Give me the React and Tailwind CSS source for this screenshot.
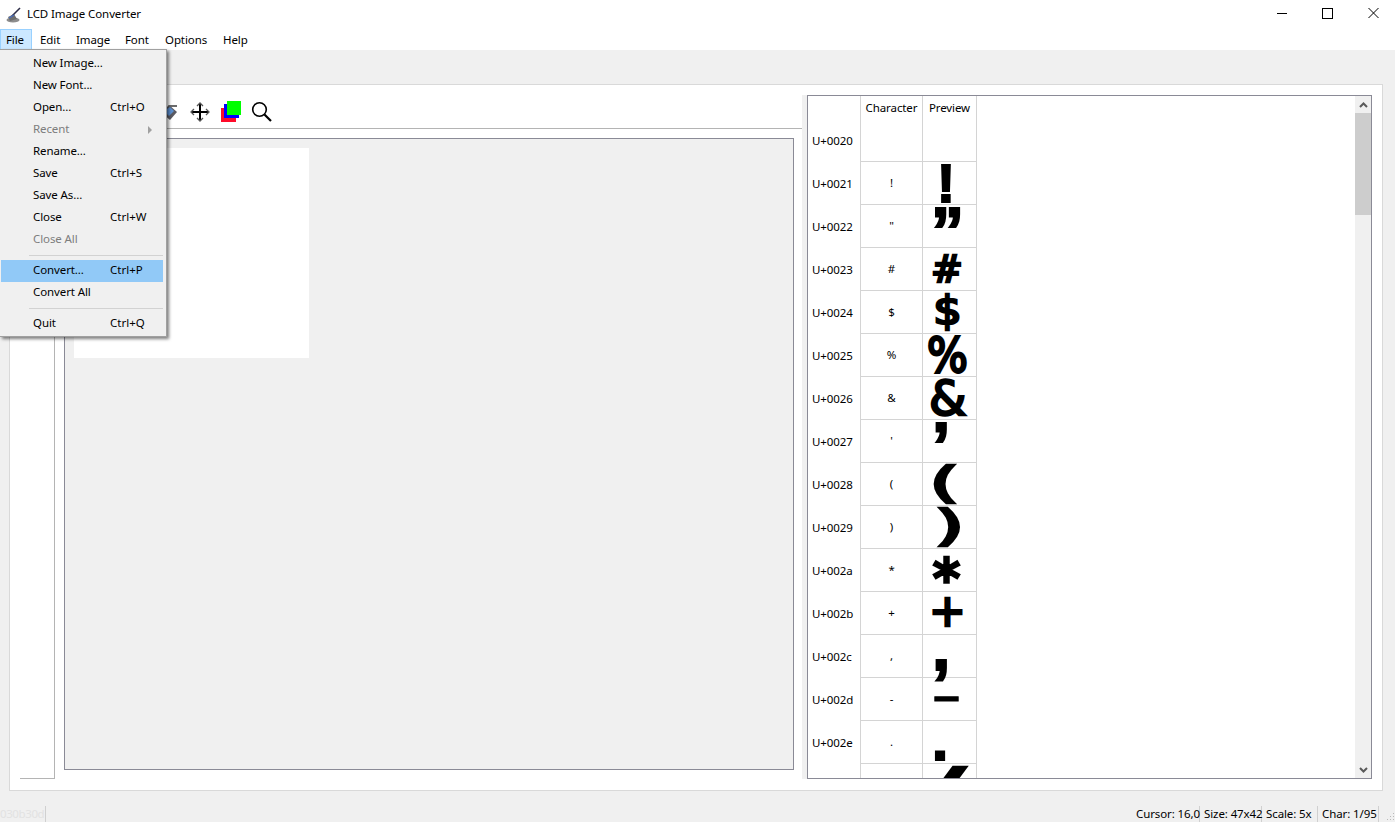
import React from "react";

const menus = [
  ["File", "w-[32px] pl-[5px] bg-[#cce8ff] border border-[#99d1ff]"],
  ["Edit", "w-[36px] pl-[7px] border border-transparent"],
  ["Image", "w-[49px] pl-[7px] border border-transparent"],
  ["Font", "w-[40px] pl-[7px] border border-transparent"],
  ["Options", "w-[58px] pl-[7px] border border-transparent"],
  ["Help", "w-[50px] pl-[7px] border border-transparent"],
];

const LB = "font-bold font-['Liberation_Sans',sans-serif] [-webkit-text-stroke:2px_#000] ";
const DV = "font-normal font-['DejaVu_Sans',sans-serif] [-webkit-text-stroke:2.5px_#000] ";
const DVH = "font-normal font-['DejaVu_Sans',sans-serif] [-webkit-text-stroke:3.5px_#000] ";
const DVT = "font-normal font-['DejaVu_Sans',sans-serif] [-webkit-text-stroke:1px_#000] ";

const rows = [
  ["U+0021", "!", "!", LB + "left-[14px] top-[-6px] text-[54px]"],
  ["U+0022", "\"", "\u201D", LB + "left-[8px] top-[-7px] text-[66px]"],
  ["U+0023", "#", "#", DV + "left-[8px] top-[2px] text-[38px]"],
  ["U+0024", "$", "$", DV + "left-[12px] top-[0px] text-[39px] scale-x-[1.15]"],
  ["U+0025", "%", "%", DV + "left-[4px] top-[0px] text-[43px] scale-y-[1.12]"],
  ["U+0026", "&", "&", DV + "left-[6px] top-[-3px] text-[48px]"],
  ["U+0027", "'", "\u2019", LB + "left-[9px] top-[-7px] text-[66px]"],
  ["U+0028", "(", "(", DV + "left-[13px] top-[-1px] text-[43px] scale-x-[1.8]"],
  ["U+0029", ")", ")", DV + "left-[18px] top-[-1px] text-[43px] scale-x-[1.8]"],
  ["U+002a", "*", "*", DVH + "left-[10px] top-[3px] text-[54px]"],
  ["U+002b", "+", "+", DV + "left-[6px] top-[-3px] text-[44px]"],
  ["U+002c", ",", ",", LB + "left-[9px] top-[-21px] text-[66px]"],
  ["U+002d", "-", "\u2013", DVT + "left-[9px] top-[-12px] text-[58px]"],
  ["U+002e", ".", ".", LB + "left-[9px] top-[-10px] text-[58px]"],
  ["U+002f", "/", "/", DV + "left-[13px] top-[-3px] text-[50px] scale-x-[2.4]"],
];

const fileItems = [
  { t: "New Image..." },
  { t: "New Font..." },
  { t: "Open...", s: "Ctrl+O" },
  { t: "Recent", d: true, arrow: true },
  { t: "Rename..." },
  { t: "Save", s: "Ctrl+S" },
  { t: "Save As..." },
  { t: "Close", s: "Ctrl+W" },
  { t: "Close All", d: true },
  { sep: true },
  { t: "Convert...", s: "Ctrl+P", active: true },
  { t: "Convert All" },
  { sep: true },
  { t: "Quit", s: "Ctrl+Q" },
];

function Glyph({ c, cls }) {
  return (
    <span className={"absolute leading-none tracking-normal text-black [stroke-linejoin:round] " + cls}>
      {c}
    </span>
  );
}

function AppIcon() {
  return (
    <svg width="18" height="18" viewBox="0 0 18 18" className="ml-[5px]">
      <ellipse cx="8" cy="14" rx="6.5" ry="2.5" fill="#8d8d8d" />
      <path d="M3 11 L9 8 L12 13 L5 15 Z" fill="#6f6f6f" />
      <path d="M7 10 L15 2" stroke="#2e2e48" strokeWidth="1.6" />
      <path d="M4 12 L9 9" stroke="#4a6fc0" strokeWidth="1.4" />
    </svg>
  );
}

function ToolIcons() {
  return (
    <div className="flex items-center h-full pl-[98px]">
      <svg width="16" height="20" viewBox="0 0 16 20" className="mr-[12px]">
        <path d="M1 9 L7 3 L15 10 L8 18 L1 12 Z" fill="#5a5a62" />
        <path d="M2 9 L8 5 L12 9 L7 14 Z" fill="#5c8fd0" />
        <path d="M6 3 H15 V5 H8 Z" fill="#6b6b6b" />
      </svg>
      <svg width="20" height="20" viewBox="0 0 20 20" className="mr-[11px]">
        <path d="M10 1.5 V18.5 M1.5 10 H18.5" stroke="#000" strokeWidth="2" />
        <path d="M7 4 L10 1 L13 4 M7 16 L10 19 L13 16 M4 7 L1 10 L4 13 M16 7 L19 10 L16 13" fill="none" stroke="#555" strokeWidth="1.3" />
      </svg>
      <div className="relative w-[21px] h-[22px] mr-[9px]">
        <div className="absolute left-0 top-[7px] w-[15px] h-[14px] bg-[#ff0a2a]" />
        <div className="absolute left-[3px] top-[3px] w-[15px] h-[14px] bg-[#0000ff]" />
        <div className="absolute left-[6px] top-0 w-[14px] h-[14px] bg-[#00ff00]" />
      </div>
      <svg width="22" height="22" viewBox="0 0 22 22">
        <circle cx="8.5" cy="8.5" r="6.8" fill="none" stroke="#000" strokeWidth="1.6" />
        <path d="M13.5 13.5 L20 20" stroke="#000" strokeWidth="2.2" />
      </svg>
    </div>
  );
}

function FileMenu() {
  return (
    <div className="absolute left-0 top-[49px] z-10 w-[167px] h-[288px] pt-[3px] pl-px pr-[3px] bg-[#f0f0f0] border border-[#a0a0a0] border-l-0 shadow-[2px_2px_3px_rgba(0,0,0,0.5)]">
      {fileItems.map((it, i) =>
        it.sep ? (
          <div key={i} className="h-[9px] flex items-center pl-[28px]">
            <div className="h-px w-full bg-[#d2d2d2]" />
          </div>
        ) : (
          <div key={i} className={"relative flex items-center h-[22px] pl-[32px] pb-[2px] " + (it.active ? "bg-[#91c9f7] " : "") + (it.d ? "text-[#7d7d7d]" : "text-black")}>
            <span className="w-[77px]">{it.t}</span>
            {it.s && <span className="tracking-normal">{it.s}</span>}
            {it.arrow && <span className="absolute left-[147px] top-[7px] w-0 h-0 border-y-[4px] border-y-transparent border-l-[4px] border-l-[#a0a0a0]" />}
          </div>
        )
      )}
    </div>
  );
}

function Cell({ head, char, children }) {
  return (
    <div className="flex h-[43px] shrink-0">
      <div className="w-[53px] pl-[4px] flex items-center border-r border-[#d4d4d4]">{head}</div>
      <div className="w-[62px] flex items-center justify-center border-r border-b border-[#d4d4d4]">{char}</div>
      <div className="relative w-[54px] border-r border-b border-[#d4d4d4]">{children}</div>
    </div>
  );
}

export default function App() {
  return (
    <div className="relative flex flex-col w-[1395px] h-[822px] overflow-hidden bg-white text-black text-[11.5px] tracking-[-0.1px] font-['Noto_Sans',sans-serif]">
      <div className="flex items-center h-[29px] shrink-0">
        <AppIcon />
        <span className="ml-[4px] pb-[2px]">LCD Image Converter</span>
        <div className="ml-auto flex items-center">
          <svg width="46" height="29" viewBox="0 0 46 29"><path d="M20 13.5 H30" stroke="#000" /></svg>
          <svg width="46" height="29" viewBox="0 0 46 29"><rect x="19.5" y="8.5" width="10" height="10" fill="none" stroke="#000" /></svg>
          <svg width="46" height="29" viewBox="0 0 46 29"><path d="M19.5 8 L29.5 18 M29.5 8 L19.5 18" stroke="#000" /></svg>
        </div>
      </div>

      <div className="flex items-stretch h-[21px] shrink-0">
        {menus.map(([m, c]) => (
          <div key={m} className={"flex items-center " + c}>{m}</div>
        ))}
      </div>

      <div className="flex flex-col flex-1 bg-[#f0f0f0] pt-[34px] pl-[9px]">
        <div className="flex w-[1374px] h-[707px] bg-white border border-[#d9d9d9] pt-[10px] pl-[10px]">
          <div className="w-[35px] h-[684px] border-r border-b border-[#b4b4b4]" />
          <div className="flex flex-col w-[747px] h-[684px] pl-[9px]">
            <div className="h-[34px] shrink-0 border-b border-[#b4b4b4]">
              <ToolIcons />
            </div>
            <div className="w-[730px] h-[632px] mt-[9px] p-[9px] bg-[#f0f0f0] border border-[#8a8a96]">
              <div className="w-[235px] h-[210px] bg-white" />
            </div>
          </div>
          <div className="w-[5px] h-[684px] bg-[#f0f0f0]" />
          <div className="flex w-[565px] h-[684px] overflow-hidden border border-[#8a8a96]">
            <div className="flex-1 flex flex-col overflow-hidden">
              <div className="flex h-[23px] shrink-0">
                <div className="w-[53px] border-r border-[#d4d4d4]" />
                <div className="w-[62px] flex items-center justify-center border-r border-[#d4d4d4]">Character</div>
                <div className="w-[54px] flex items-center justify-center border-r border-[#d4d4d4]">Preview</div>
              </div>
              <Cell head="U+0020" char="" />
              {rows.map(([h, c, g, cls]) => (
                <Cell key={h} head={h} char={c}>
                  <Glyph c={g} cls={cls} />
                </Cell>
              ))}
            </div>
            <div className="flex flex-col w-[16px] shrink-0 bg-[#f0f0f0]">
              <div className="h-[17px] flex items-center justify-center">
                <svg width="9" height="6" viewBox="0 0 9 6"><path d="M1 5 L4.5 1.5 L8 5" fill="none" stroke="#5a5a5a" strokeWidth="2" /></svg>
              </div>
              <div className="h-[102px] bg-[#cdcdcd]" />
              <div className="flex-1" />
              <div className="h-[17px] flex items-center justify-center">
                <svg width="9" height="6" viewBox="0 0 9 6"><path d="M1 1 L4.5 4.5 L8 1" fill="none" stroke="#5a5a5a" strokeWidth="2" /></svg>
              </div>
            </div>
          </div>
        </div>

        <div className="relative flex items-center h-[31px] -ml-[9px] pt-[14px]">
          <span className="text-[#e2e2e2] w-[46px] h-[16px] leading-[16px] tracking-[-0.4px] border-r border-[#d0d0d0] overflow-hidden whitespace-nowrap">030b30d</span>
          <div className="ml-auto flex items-center h-[16px] pr-[16px]">
            <span className="w-[64px] h-full leading-[16px] border-r border-[#d0d0d0] whitespace-nowrap">Cursor: 16,0</span>
            <span className="w-[62px] pl-[4px] h-full leading-[16px] border-r border-[#d0d0d0] whitespace-nowrap">Size: 47x42</span>
            <span className="w-[56px] pl-[4px] h-full leading-[16px] border-r border-[#d0d0d0] whitespace-nowrap">Scale: 5x</span>
            <span className="w-[61px] pl-[4px] h-full leading-[16px] border-r border-[#d0d0d0] whitespace-nowrap">Char: 1/95</span>
          </div>
          <svg width="10" height="10" viewBox="0 0 10 10" className="absolute right-0 bottom-0">
            <path d="M8 1h1v1H8zM5 4h1v1H5zM8 4h1v1H8zM2 7h1v1H2zM5 7h1v1H5zM8 7h1v1H8z" fill="#b9b9b9" />
          </svg>
        </div>
      </div>

      <FileMenu />
    </div>
  );
}
